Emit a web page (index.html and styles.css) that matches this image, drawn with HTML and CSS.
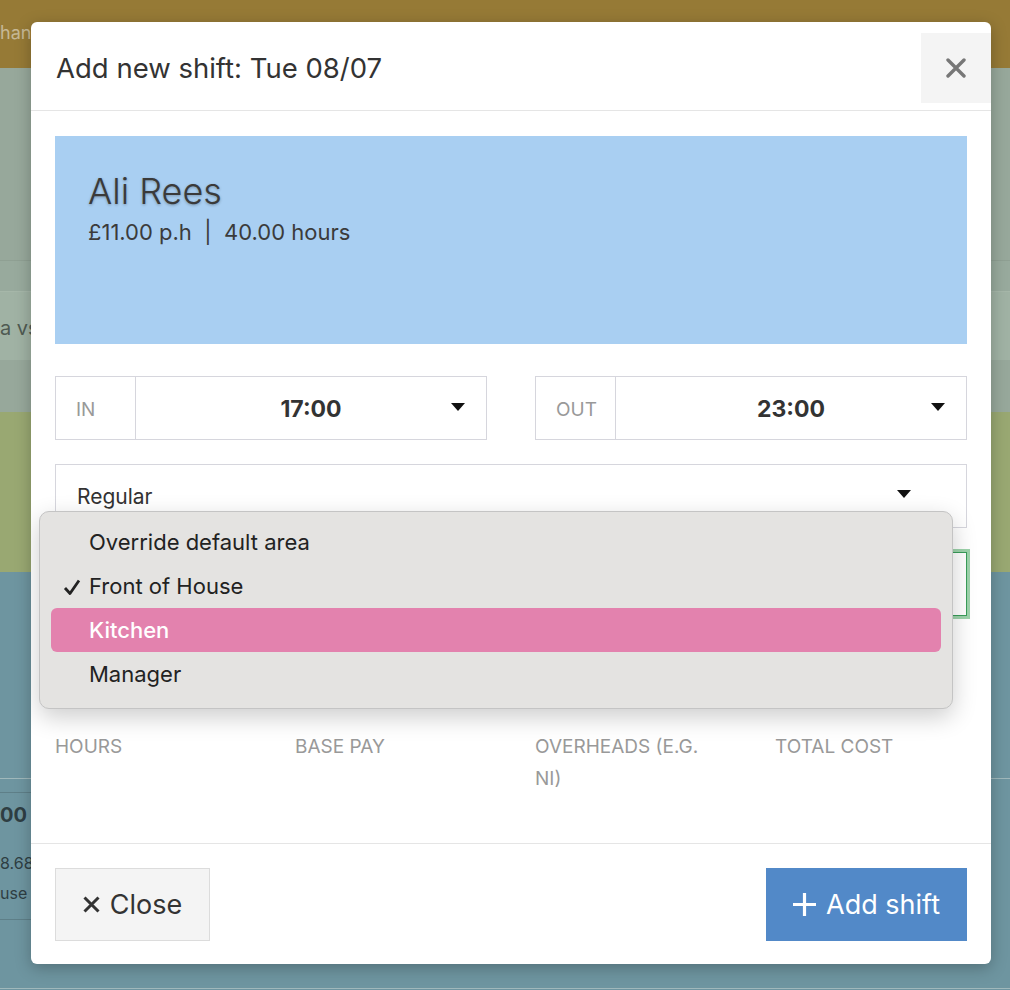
FILE: index.html
```html
<!DOCTYPE html>
<html lang="en">

<head>
  <meta charset="UTF-8">
  <meta name="viewport" content="width=device-width, initial-scale=1.0">
  <title>Add new shift</title>
  <link rel="stylesheet" href="styles.css">
</head>

<body>
  <div class="page">
    <!-- dimmed rota behind the modal -->
    <div class="strip strip-notice"><span class="notice-text">hanges for availability will be reviewed by your manager</span></div>
    <div class="strip strip-grey"></div>
    <div class="strip strip-grey-line"></div>
    <div class="strip strip-light"><span class="strip-text">a vs last week</span></div>
    <div class="strip strip-grey"></div>
    <div class="strip strip-green"></div>
    <div class="strip strip-teal"></div>
    <div class="strip strip-teal-row">
      <div class="row-total">00</div>
      <div class="row-small">8.68</div>
      <div class="row-small">use</div>
    </div>
    <div class="strip strip-teal-end"></div>

    <div class="modal">
      <div class="modal-header">
        <h1 class="modal-title">Add new shift: Tue 08/07</h1>
        <button class="modal-close" aria-label="Close">
          <svg width="20" height="20" viewBox="0 0 20 20"><path d="M2 2L18 18M18 2L2 18" stroke="#777" stroke-width="3.4" stroke-linecap="round"/></svg>
        </button>
      </div>

      <div class="modal-body">
        <div class="staff-card">
          <div class="staff-name">Ali Rees</div>
          <div class="staff-meta">£11.00 p.h &nbsp;|&nbsp; 40.00 hours</div>
        </div>

        <div class="time-row">
          <div class="time-group">
            <div class="time-label">IN</div>
            <div class="time-value">
              <span></span>
              <span class="time-text">17:00</span>
              <span class="caret"></span>
            </div>
          </div>
          <div class="time-group">
            <div class="time-label">OUT</div>
            <div class="time-value">
              <span></span>
              <span class="time-text">23:00</span>
              <span class="caret"></span>
            </div>
          </div>
        </div>

        <div class="select-box">
          <span>Regular</span>
          <span class="caret"></span>
        </div>

        <div class="area-box"></div>

        <div class="cost-labels">
          <div class="cost-label">Hours</div>
          <div class="cost-label">Base pay</div>
          <div class="cost-label">Overheads (e.g. NI)</div>
          <div class="cost-label">Total cost</div>
        </div>
      </div>

      <div class="modal-footer">
        <button class="button button-close">
          <svg width="17" height="17" viewBox="0 0 17 17"><path d="M1.5 1.5L15.5 15.5M15.5 1.5L1.5 15.5" stroke="#333" stroke-width="3"/></svg>
          Close
        </button>
        <button class="button button-add">
          <svg width="23" height="23" viewBox="0 0 23 23"><path d="M11.5 0V23M0 11.5H23" stroke="#fff" stroke-width="3.2"/></svg>
          Add shift
        </button>
      </div>

      <!-- open area picker (native popup) -->
      <div class="area-menu">
        <div class="area-option">Override default area</div>
        <div class="area-option">
          <svg class="check" width="18" height="18" viewBox="0 0 18 18"><path d="M2 10L7 15.5L16 2.5" fill="none" stroke="#222" stroke-width="2.8" stroke-linejoin="round"/></svg>
          Front of House
        </div>
        <div class="area-option area-option-active">Kitchen</div>
        <div class="area-option">Manager</div>
      </div>
    </div>
  </div>
</body>

</html>
```

FILE: styles.css
```css
body {
  margin: 0;
  font-family: Inter, "Noto Sans", sans-serif;
  color: #333;
}

.page {
  position: relative;
  width: 1010px;
  height: 990px;
  overflow: hidden;
  background: #6e95a0;
}

.strip {
  overflow: hidden;
  white-space: nowrap;
}

.strip-notice {
  height: 68px;
  background: #967a36;
}

.notice-text {
  display: block;
  padding-top: 22px;
  font-size: 18px;
  color: #c6b895;
}

.strip-grey {
  height: 192px;
  background: #97a89b;
}

.strip-grey-line {
  height: 30px;
  background: #98aa9d;
  border-top: 1px solid #8fa093;
}

.strip-light {
  height: 68px;
  background: #a0b2a4;
  border-top: 1px solid #a6b7a9;
}

.strip-light + .strip-grey {
  height: 52px;
}

.strip-text {
  display: block;
  padding-top: 24px;
  font-size: 20px;
  color: #4f5a52;
}

.strip-green {
  height: 160px;
  background: #99a872;
}

.strip-teal {
  height: 206px;
  background: #6e95a0;
  border-bottom: 1px solid #a0b8bb;
}

.strip-teal-row {
  height: 126px;
  margin-top: 13px;
  border-top: 1px solid #5e7f88;
  border-bottom: 1px solid #5e7f88;
  width: 40px;
}

.row-total {
  padding-top: 10px;
  font-size: 20px;
  font-weight: bold;
  color: #2e3e43;
}

.row-small {
  margin-top: 10px;
  font-size: 16px;
  color: #2e3e43;
}

.row-total + .row-small {
  margin-top: 26px;
}

.strip-teal-end {
  height: 68px;
  border-bottom: 1px solid #a0b8bb;
}

.modal {
  position: absolute;
  left: 31px;
  top: 22px;
  width: 960px;
  height: 942px;
  background: #fff;
  border-radius: 6px;
  display: flex;
  flex-direction: column;
  overflow: hidden;
  box-shadow: 0 4px 16px rgba(0, 0, 0, 0.25);
}

.modal-header {
  height: 89px;
  box-sizing: border-box;
  border-bottom: 1px solid #e5e5e5;
  display: flex;
  align-items: flex-start;
  justify-content: space-between;
  padding-left: 25px;
}

.modal-title {
  margin: 0;
  padding-top: 29px;
  font-size: 27.5px;
  font-weight: 400;
  color: #333;
}

.modal-close {
  margin-top: 11px;
  width: 70px;
  height: 70px;
  border: none;
  background: #f4f4f4;
  display: flex;
  align-items: center;
  justify-content: center;
  padding: 0;
}

.modal-body {
  flex: 1;
  padding: 25px 24px 23px;
}

.staff-card {
  height: 208px;
  box-sizing: border-box;
  background: #a9cff2;
  padding: 33px 33px;
}

.staff-name {
  font-size: 36px;
  font-weight: 300;
  color: #3a3a3a;
  line-height: 44px;
  text-shadow: 0 1px 3px rgba(0, 0, 0, 0.3);
}

.staff-meta {
  margin-top: 4px;
  font-size: 22px;
  color: #3b3b3b;
  line-height: 30px;
}

.time-row {
  margin-top: 32px;
  display: grid;
  grid-template-columns: 1fr 1fr;
  gap: 48px;
}

.time-group {
  height: 64px;
  box-sizing: border-box;
  border: 1px solid #d6d6dd;
  display: flex;
}

.time-label {
  width: 80px;
  box-sizing: border-box;
  border-right: 1px solid #d6d6dd;
  padding-left: 20px;
  padding-top: 3px;
  display: flex;
  align-items: center;
  font-size: 19px;
  color: #999;
}

.time-value {
  flex: 1;
  display: grid;
  grid-template-columns: 1fr auto 1fr;
  align-items: center;
  padding: 2px 21px 0;
}

.time-text {
  font-size: 23px;
  font-weight: 700;
  color: #333;
}

.time-value .caret {
  justify-self: end;
  margin-top: -4px;
}

.caret {
  width: 0;
  height: 0;
  border-left: 7px solid transparent;
  border-right: 7px solid transparent;
  border-top: 8px solid #111;
}

.select-box {
  margin-top: 24px;
  height: 64px;
  box-sizing: border-box;
  border: 1px solid #d6d6dd;
  display: flex;
  align-items: center;
  justify-content: space-between;
  padding: 0 55px 0 21px;
  font-size: 21px;
  color: #333;
}

.select-box .caret {
  margin-top: -4px;
}

.area-box {
  margin-top: 24px;
  height: 64px;
  box-sizing: border-box;
  border: 1px solid #3a9d5a;
  box-shadow: 0 0 0 3px #9dd3ab;
}

.cost-labels {
  margin-top: 115px;
  display: grid;
  grid-template-columns: repeat(4, 240px);
}

.cost-label {
  font-size: 19px;
  line-height: 32px;
  text-transform: uppercase;
  color: #999;
  padding-right: 60px;
}

.modal-footer {
  height: 121px;
  box-sizing: border-box;
  border-top: 1px solid #e5e5e5;
  padding: 24px;
  display: flex;
  justify-content: space-between;
}

.button {
  height: 73px;
  display: flex;
  align-items: center;
  gap: 10px;
  font-family: Inter, "Noto Sans", sans-serif;
  font-size: 27px;
  border-radius: 0;
  cursor: pointer;
}

.button-close {
  width: 155px;
  justify-content: center;
  background: #f4f4f4;
  border: 1px solid #dcdcdc;
  color: #333;
}

.button-add {
  width: 201px;
  justify-content: center;
  background: #5289c8;
  border: none;
  color: #fff;
}

.area-menu {
  position: absolute;
  left: 8px;
  top: 489px;
  width: 914px;
  box-sizing: border-box;
  padding: 8px 11px 12px;
  background: #e4e3e1;
  border: 1px solid #c4c4c4;
  border-radius: 10px;
  box-shadow: 0 8px 24px rgba(0, 0, 0, 0.2);
}

.area-option {
  position: relative;
  height: 44px;
  display: flex;
  align-items: center;
  padding-left: 38px;
  font-size: 22px;
  color: #222;
  border-radius: 6px;
}

.area-option-active {
  background: #e382ae;
  color: #fff;
  font-weight: 500;
}

.check {
  position: absolute;
  left: 12px;
  top: 14px;
}
```
